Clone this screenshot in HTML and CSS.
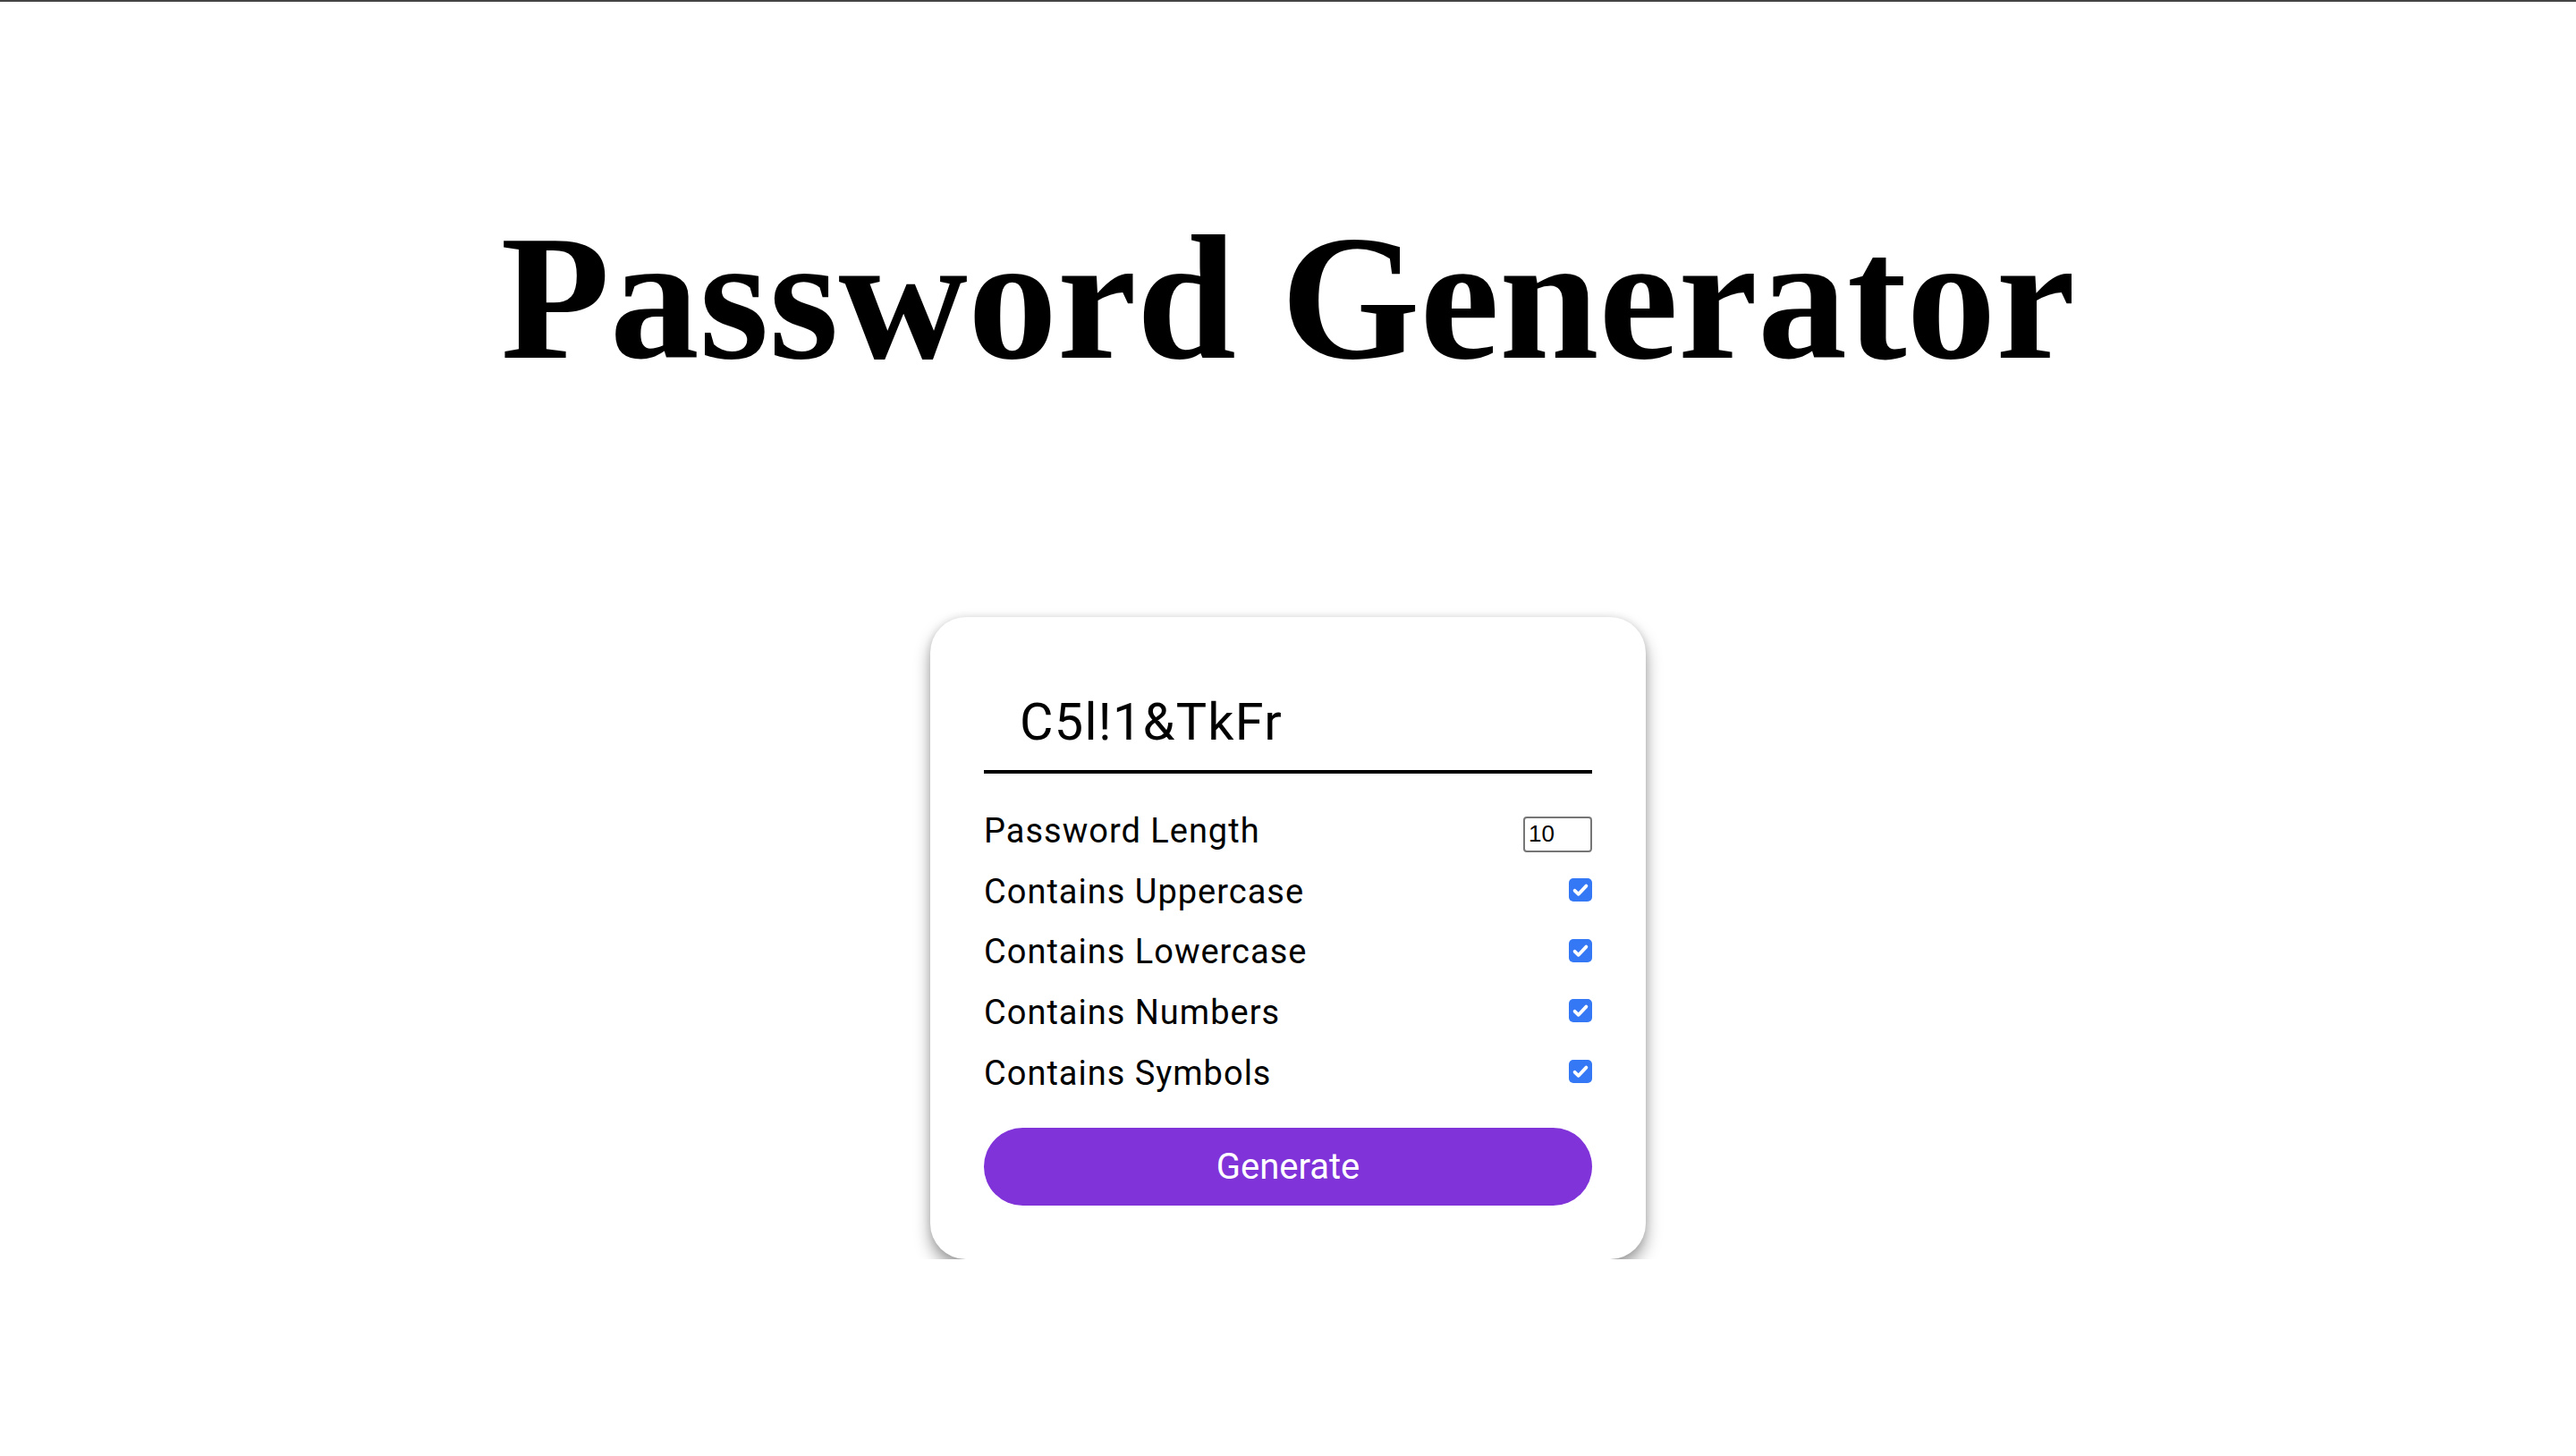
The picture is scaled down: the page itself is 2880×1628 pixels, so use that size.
FILE: index.html
```html
<!DOCTYPE html>
<html lang="en">
<head>
<meta charset="utf-8">
<title>Password Generator</title>
<link rel="stylesheet" href="styles.css">
</head>
<body>
<main class="page">
  <h1 class="title">Password Generator</h1>
  <section class="card">
    <div class="password">C5l!1&amp;TkFr</div>
    <div class="options">
      <label class="row">
        <span class="row-label">Password Length</span>
        <input class="length" type="number" value="10">
      </label>
      <div class="row">
        <span class="row-label">Contains Uppercase</span>
        <span class="check" role="checkbox" aria-checked="true"><svg viewBox="0 0 13 13" width="26" height="26"><path d="M3.3 6.9 L5.4 8.9 L9.7 4.3" /></svg></span>
      </div>
      <div class="row">
        <span class="row-label">Contains Lowercase</span>
        <span class="check" role="checkbox" aria-checked="true"><svg viewBox="0 0 13 13" width="26" height="26"><path d="M3.3 6.9 L5.4 8.9 L9.7 4.3" /></svg></span>
      </div>
      <div class="row">
        <span class="row-label">Contains Numbers</span>
        <span class="check" role="checkbox" aria-checked="true"><svg viewBox="0 0 13 13" width="26" height="26"><path d="M3.3 6.9 L5.4 8.9 L9.7 4.3" /></svg></span>
      </div>
      <div class="row">
        <span class="row-label">Contains Symbols</span>
        <span class="check" role="checkbox" aria-checked="true"><svg viewBox="0 0 13 13" width="26" height="26"><path d="M3.3 6.9 L5.4 8.9 L9.7 4.3" /></svg></span>
      </div>
    </div>
    <button class="generate" type="button">Generate</button>
  </section>
</main>
</body>
</html>
```

FILE: styles.css
```css
html {
  background: #ffffff;
}

body {
  margin: 0;
  border-top: 2px solid #454545;
  font-family: Roboto, "Liberation Sans", Arial, sans-serif;
  color: #000000;
}

.page {
  display: flex;
  flex-direction: column;
  align-items: center;
}

.title {
  margin: 231px 0 0;
  font-family: "Liberation Serif", "Times New Roman", serif;
  font-weight: 700;
  font-size: 200px;
  line-height: 200px;
  text-align: center;
}

.card {
  box-sizing: border-box;
  width: 800px;
  margin-top: 257px;
  padding: 60px;
  background: #ffffff;
  border-radius: 40px;
  box-shadow: 0 10px 18px rgba(0, 0, 0, 0.38), 0 0 8px rgba(0, 0, 0, 0.1);
  display: flex;
  flex-direction: column;
}

.password {
  font-family: Roboto, "Liberation Sans", sans-serif;
  font-size: 57.6px;
  line-height: 67.5px;
  letter-spacing: 1.3px;
  padding: 23.5px 40px 20px;
  border-bottom: 4px solid #000000;
  white-space: nowrap;
}

.options {
  display: flex;
  flex-direction: column;
  gap: 25px;
  margin: 43px 0 40px;
}

.row {
  display: flex;
  justify-content: space-between;
  align-items: center;
  height: 42.7px;
  font-size: 38px;
  line-height: 42.7px;
  letter-spacing: 1px;
}

.row-label {
  white-space: nowrap;
}

.length {
  box-sizing: border-box;
  width: 77px;
  height: 40px;
  margin: 7px 0 0;
  padding: 2px 4px;
  border: 2px solid #767676;
  border-radius: 4px;
  font-family: "Liberation Sans", Arial, sans-serif;
  font-size: 26px;
  letter-spacing: 0;
  color: #000000;
  background: #ffffff;
  -moz-appearance: textfield;
}

.length::-webkit-inner-spin-button,
.length::-webkit-outer-spin-button {
  -webkit-appearance: none;
  margin: 0;
}

.check {
  display: block;
  width: 26px;
  height: 26px;
  margin-top: -4px;
  border-radius: 5px;
  background: #3478f6;
}

.check svg {
  display: block;
}

.check path {
  fill: none;
  stroke: #ffffff;
  stroke-width: 1.9;
  stroke-linecap: round;
  stroke-linejoin: round;
}

.generate {
  height: 87px;
  border: none;
  border-radius: 44px;
  background: #8033d9;
  color: #ffffff;
  font-family: Roboto, "Liberation Sans", sans-serif;
  font-size: 40px;
  cursor: pointer;
}
```
